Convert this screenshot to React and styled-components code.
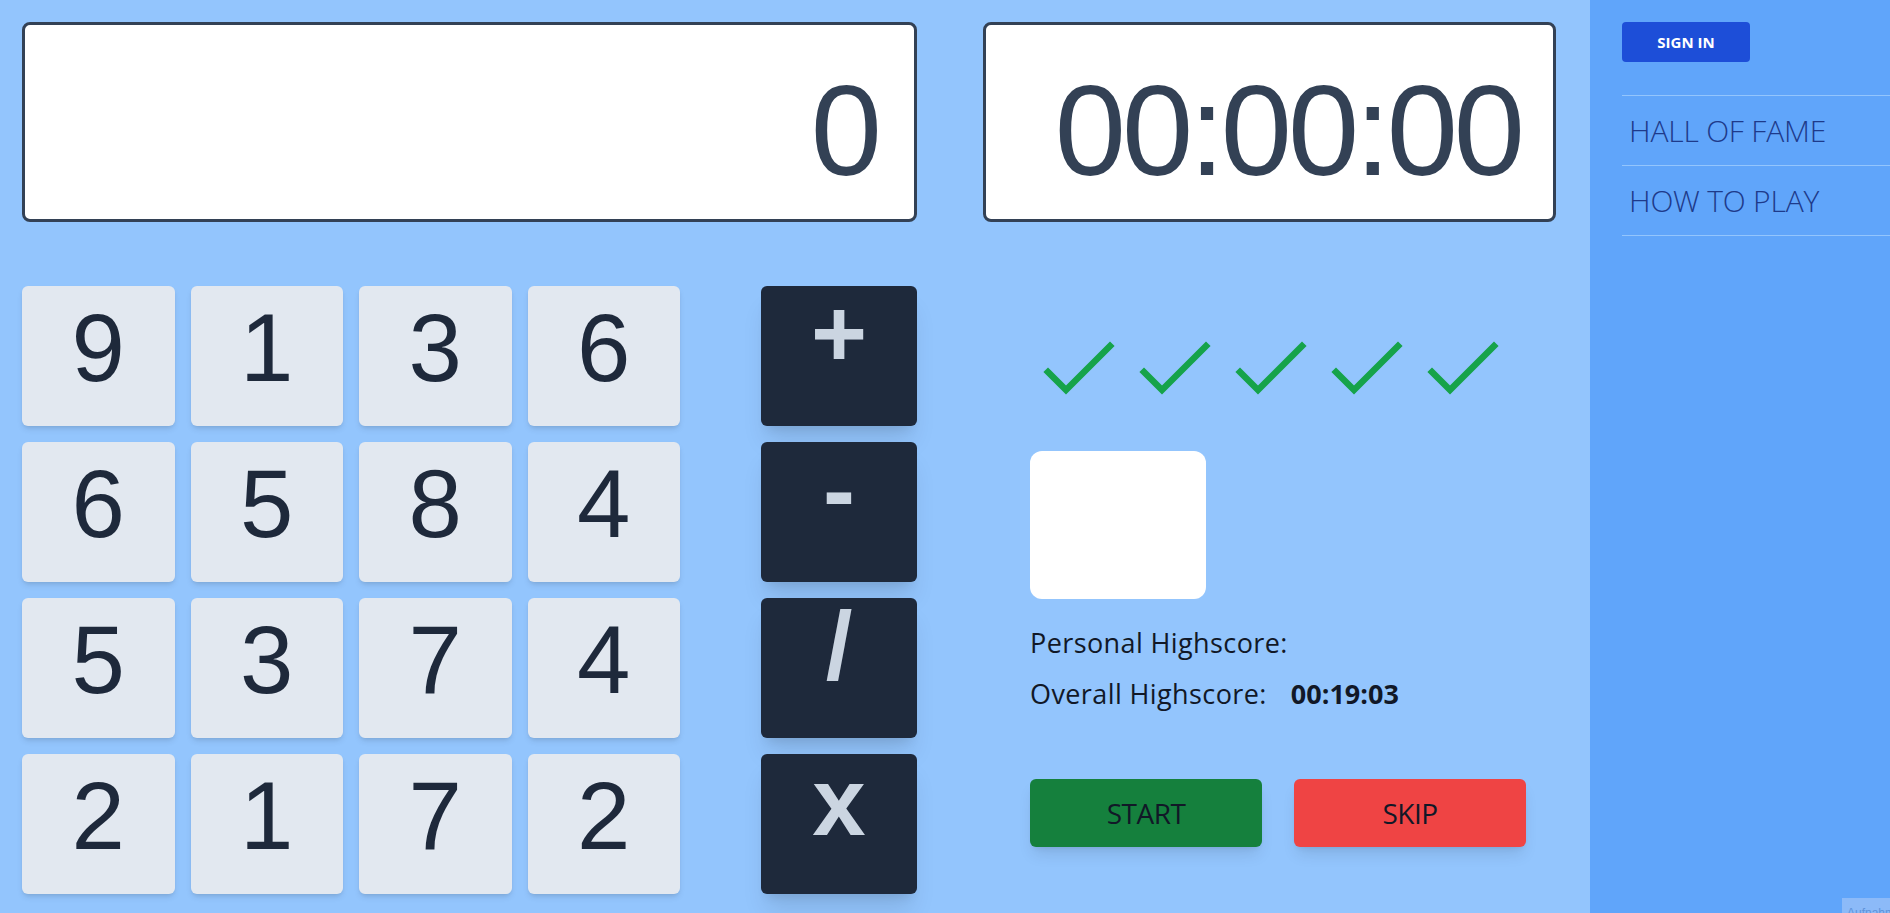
import React from "react";
import styled, { createGlobalStyle } from "styled-components";

const GlobalStyle = createGlobalStyle`
  html, body {
    margin: 0;
    padding: 0;
    height: 100%;
    overflow: hidden;
  }
  body {
    font-family: "Open Sans", "Noto Sans", sans-serif;
  }
  * {
    box-sizing: border-box;
  }
`;

const Page = styled.div`
  display: flex;
  width: 100%;
  height: 100vh;
  position: relative;
  overflow: hidden;
`;

const Main = styled.main`
  flex: 1;
  background-color: #93c5fd;
  padding: 22px;
  display: flex;
  gap: 66px;
`;

const LeftColumn = styled.section`
  width: 895px;
  display: flex;
  flex-direction: column;
  gap: 64px;
`;

const RightColumn = styled.section`
  width: 573px;
  display: flex;
  flex-direction: column;
`;

const Display = styled.div`
  flex-shrink: 0;
  height: 200px;
  background-color: #fff;
  border: 3px solid #334155;
  border-radius: 8px;
  padding: 42px 32px 0 0;
  text-align: right;
  font-family: "Liberation Sans", Arial, sans-serif;
  font-size: 128px;
  line-height: 128px;
  color: #334155;
  letter-spacing: ${(p) => (p.$tight ? "-4px" : "0")};
  white-space: nowrap;
`;

const Keypad = styled.div`
  flex-shrink: 0;
  display: flex;
  gap: 81px;
`;

const NumberGrid = styled.div`
  width: 658px;
  display: grid;
  grid-template-columns: repeat(4, 1fr);
  grid-auto-rows: 140px;
  gap: 16px;
`;

const OperatorColumn = styled.div`
  width: 156px;
  display: grid;
  grid-auto-rows: 140px;
  gap: 16px;
`;

const Tile = styled.button`
  border: none;
  margin: 0;
  border-radius: 6px;
  font-family: "Liberation Sans", Arial, sans-serif;
  font-size: 96px;
  line-height: 1;
  text-align: center;
  display: flex;
  justify-content: center;
  align-items: flex-start;
  cursor: pointer;
`;

const NumberTile = styled(Tile)`
  background-color: #e2e8f0;
  color: #1e293b;
  padding: 14px 0 0;
  box-shadow: 0 4px 6px -1px rgba(0, 0, 0, 0.1), 0 2px 4px -2px rgba(0, 0, 0, 0.1);
`;

const OperatorTile = styled(Tile)`
  background-color: #1e293b;
  color: #cbd5e1;
  font-weight: 700;
  padding: 0;
  box-shadow: 0 20px 25px -5px rgba(0, 0, 0, 0.1), 0 8px 10px -6px rgba(0, 0, 0, 0.1);
`;

const Panel = styled.div`
  padding-left: 47px;
  display: flex;
  flex-direction: column;
`;

const CheckRow = styled.div`
  display: flex;
  gap: 20px;
  margin: 116px 0 0 10px;
`;

const Preview = styled.div`
  margin-top: 53px;
  width: 176px;
  height: 148px;
  background-color: #fff;
  border-radius: 12px;
`;

const Scores = styled.div`
  margin-top: 18px;
  color: #111827;
  font-size: 27px;
  letter-spacing: 0.4px;
`;

const ScoreLine = styled.div`
  height: 51px;
  line-height: 51px;
  white-space: nowrap;
`;

const ScoreValue = styled.span`
  font-weight: 700;
  margin-left: 24px;
  letter-spacing: 0;
`;

const ButtonRow = styled.div`
  margin-top: 60px;
  display: flex;
  gap: 32px;
`;

const ActionButton = styled.button`
  width: 232px;
  height: 68px;
  border: none;
  border-radius: 6px;
  background-color: ${(p) => p.$bg};
  color: #111827;
  font-family: "Open Sans", sans-serif;
  font-size: 28px;
  letter-spacing: -0.5px;
  box-shadow: 0 10px 15px -3px rgba(0, 0, 0, 0.1), 0 4px 6px -4px rgba(0, 0, 0, 0.1);
  cursor: pointer;
`;

const Sidebar = styled.aside`
  width: 300px;
  background-color: #60a5fa;
  padding: 22px 0 0 32px;
`;

const SignIn = styled.button`
  width: 128px;
  height: 40px;
  border: none;
  border-radius: 4px;
  background-color: #1d4ed8;
  color: #fff;
  font-family: "Open Sans", sans-serif;
  font-size: 15px;
  font-weight: 700;
  cursor: pointer;
`;

const Nav = styled.nav`
  margin-top: 33px;
  border-top: 1px solid #93c5fd;
`;

const NavItem = styled.a`
  display: block;
  height: 70px;
  line-height: 69px;
  padding-left: 7px;
  border-bottom: 1px solid #93c5fd;
  color: #1e3a8a;
  font-size: 30px;
  font-weight: 300;
  letter-spacing: -0.2px;
  text-decoration: none;
  cursor: pointer;
`;

const RecordBadge = styled.div`
  position: absolute;
  right: 0;
  bottom: 0;
  width: 48px;
  height: 15px;
  background-color: #8cbaf8;
  color: #5f93da;
  font-family: "Liberation Sans", Arial, sans-serif;
  font-size: 12px;
  line-height: 14px;
  padding: 8px 0 0 5px;
  overflow: hidden;
  white-space: nowrap;
`;

const Check = () => (
  <svg width="76" height="60" viewBox="0 0 76 60">
    <polyline
      points="8,34 26,52 70,8"
      fill="none"
      stroke="#16a34a"
      strokeWidth="6.5"
      strokeLinecap="square"
      strokeLinejoin="miter"
    />
  </svg>
);

const numbers = [9, 1, 3, 6, 6, 5, 8, 4, 5, 3, 7, 4, 2, 1, 7, 2];
const operators = ["+", "-", "/", "x"];

export default function App() {
  return (
    <>
      <GlobalStyle />
      <Page>
        <Main>
          <LeftColumn>
            <Display>0</Display>
            <Keypad>
              <NumberGrid>
                {numbers.map((n, i) => (
                  <NumberTile key={i}>{n}</NumberTile>
                ))}
              </NumberGrid>
              <OperatorColumn>
                {operators.map((op) => (
                  <OperatorTile key={op}>{op}</OperatorTile>
                ))}
              </OperatorColumn>
            </Keypad>
          </LeftColumn>
          <RightColumn>
            <Display $tight>00:00:00</Display>
            <Panel>
              <CheckRow>
                {[0, 1, 2, 3, 4].map((i) => (
                  <Check key={i} />
                ))}
              </CheckRow>
              <Preview />
              <Scores>
                <ScoreLine>Personal Highscore:</ScoreLine>
                <ScoreLine>
                  Overall Highscore:<ScoreValue>00:19:03</ScoreValue>
                </ScoreLine>
              </Scores>
              <ButtonRow>
                <ActionButton $bg="#15803d">START</ActionButton>
                <ActionButton $bg="#ef4444">SKIP</ActionButton>
              </ButtonRow>
            </Panel>
          </RightColumn>
        </Main>
        <Sidebar>
          <SignIn>SIGN IN</SignIn>
          <Nav>
            <NavItem>HALL OF FAME</NavItem>
            <NavItem>HOW TO PLAY</NavItem>
          </Nav>
        </Sidebar>
        <RecordBadge>Aufnahme</RecordBadge>
      </Page>
    </>
  );
}
